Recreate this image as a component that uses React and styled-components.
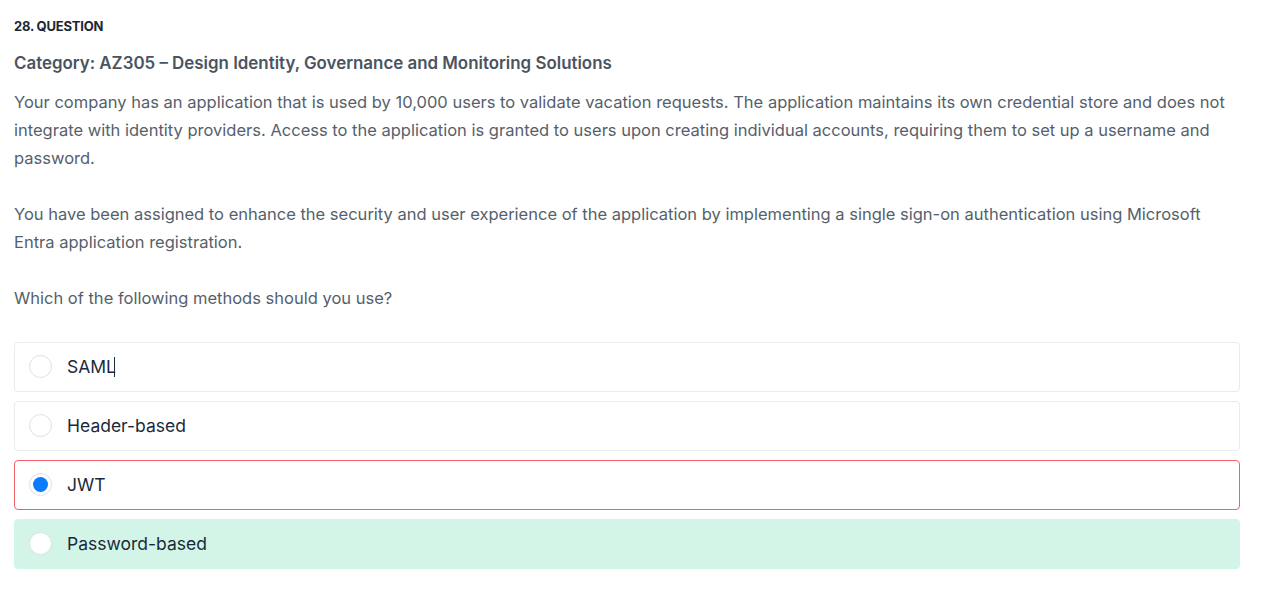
import React from "react";
import styled, { createGlobalStyle } from "styled-components";

const GlobalStyle = createGlobalStyle`
  body {
    margin: 0;
    background: #ffffff;
    font-family: Inter, "Noto Sans", sans-serif;
  }
`;

const options = [
  { label: "SAML", caret: true },
  { label: "Header-based" },
  { label: "JWT", state: "wrong", checked: true },
  { label: "Password-based", state: "correct" },
];

function App() {
  return (
    <Container>
      <GlobalStyle />
      <Heading>28. QUESTION</Heading>
      <Category>Category: AZ305 – Design Identity, Governance and Monitoring Solutions</Category>
      <Body>
        <Text>
          Your company has an application that is used by 10,000 users to validate vacation requests. The
          application maintains its own credential store and does not integrate with identity providers. Access
          to the application is granted to users upon creating individual accounts, requiring them to set up a
          username and password.
        </Text>
        <Spacer />
        <Text>
          You have been assigned to enhance the security and user experience of the application by implementing
          a single sign-on authentication using Microsoft Entra application registration.
        </Text>
        <Spacer />
        <Text>Which of the following methods should you use?</Text>
      </Body>
      <Options>
        {options.map((o) => (
          <Option key={o.label} $state={o.state}>
            <Radio $checked={o.checked} />
            <Label>
              {o.label}
              {o.caret && <Caret />}
            </Label>
          </Option>
        ))}
      </Options>
    </Container>
  );
}

export default App;

const Container = styled.main`
  padding: 18px 42px 0 14px;
`;

const Heading = styled.h3`
  margin: 0;
  font-size: 13px;
  font-weight: 700;
  letter-spacing: -0.2px;
  color: #1d2733;
  line-height: 16px;
`;

const Category = styled.h2`
  margin: 19px 0 0;
  font-size: 16.9px;
  font-weight: 600;
  color: #4a5460;
  line-height: 20px;
`;

const Body = styled.div`
  margin-top: 15px;
`;

const Text = styled.p`
  margin: 0;
  font-size: 16.5px;
  line-height: 28px;
  color: #565f6b;
`;

const Spacer = styled.div`
  height: 28px;
`;

const Options = styled.div`
  display: flex;
  flex-direction: column;
  gap: 9px;
  margin-top: 29.5px;
`;

const Option = styled.div`
  display: flex;
  align-items: center;
  height: 50px;
  box-sizing: border-box;
  padding-left: 15px;
  border-radius: 4px;
  border: 1px solid
    ${(p) => (p.$state === "wrong" ? "#f26169" : p.$state === "correct" ? "#d2f5e7" : "#eaebed")};
  background: ${(p) => (p.$state === "correct" ? "#d2f5e7" : "#ffffff")};
`;

const Radio = styled.span`
  width: 23px;
  height: 23px;
  margin-left: -1px;
  border-radius: 50%;
  box-sizing: border-box;
  border: 1px solid #dbe0e8;
  background: #ffffff;
  display: flex;
  align-items: center;
  justify-content: center;
  &::after {
    content: "";
    display: ${(p) => (p.$checked ? "block" : "none")};
    width: 15px;
    height: 15px;
    border-radius: 50%;
    background: #0a7cff;
  }
`;

const Label = styled.span`
  margin-left: 15px;
  font-size: 17.5px;
  color: #1b2a3a;
  display: flex;
  align-items: center;
`;

const Caret = styled.span`
  display: inline-block;
  width: 1px;
  height: 20px;
  background: #1b2a3a;
  margin-left: -2px;
`;
